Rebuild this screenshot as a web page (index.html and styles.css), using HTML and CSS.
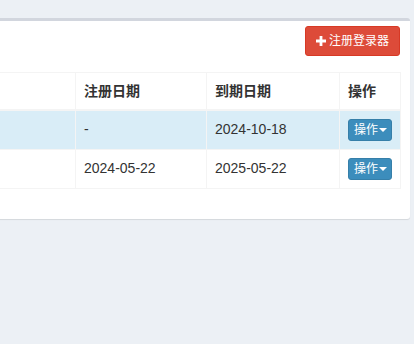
FILE: index.html
```html
<!DOCTYPE html>
<html lang="zh-CN">
<head>
  <meta charset="UTF-8" />
  <title>登录器管理</title>
  <meta name="viewport" content="width=device-width, initial-scale=1.0"/>
  <link rel="stylesheet" href="styles.css">
</head>
<body>

<section class="content">
  <div class="box">
    <div class="box-header">
      <button class="btn btn-danger">
        <svg class="icon-plus" viewBox="0 0 10 10" width="10" height="10"><path d="M3.6 0h2.8v3.6H10v2.8H6.4V10H3.6V6.4H0V3.6h3.6z" fill="#fff"/></svg>注册登录器
      </button>
    </div>

    <div class="box-body">
      <table class="table">
        <colgroup>
          <col class="col-id">
          <col class="col-name">
          <col class="col-date">
          <col class="col-date2">
          <col class="col-op">
        </colgroup>
        <thead>
          <tr>
            <th></th>
            <th></th>
            <th>注册日期</th>
            <th>到期日期</th>
            <th>操作</th>
          </tr>
        </thead>
        <tbody>
          <tr class="info">
            <td></td>
            <td></td>
            <td>-</td>
            <td>2024-10-18</td>
            <td><button class="btn btn-primary btn-xs">操作<span class="caret"></span></button></td>
          </tr>
          <tr>
            <td></td>
            <td></td>
            <td>2024-05-22</td>
            <td>2025-05-22</td>
            <td><button class="btn btn-primary btn-xs">操作<span class="caret"></span></button></td>
          </tr>
        </tbody>
      </table>
    </div>
  </div>
</section>

</body>
</html>
```

FILE: styles.css
```css
* {
  margin: 0;
  padding: 0;
  box-sizing: border-box;
}

body {
  background-color: #ecf0f5;
  color: #333;
  font-family: "Liberation Sans", Arial, "Noto Sans CJK SC", sans-serif;
  font-size: 14px;
  line-height: 20px;
  height: 344px;
  overflow: hidden;
}

.content {
  padding: 18px 4px 0 0;
}

/* Карточка */
.box {
  margin-left: -300px;
  background: #fff;
  border-top: 3px solid #d2d6de;
  border-radius: 3px;
  box-shadow: 0 1px 1px rgba(0, 0, 0, 0.1);
}

.box-header {
  display: flex;
  justify-content: flex-end;
  padding: 5px 10px 0;
}

.box-body {
  padding: 16px 10px 10px;
}

.btn {
  display: inline-flex;
  align-items: center;
  border: 1px solid transparent;
  border-radius: 3px;
  color: #fff;
  font-family: inherit;
  cursor: pointer;
}

.btn-danger {
  height: 30px;
  padding: 0 10px;
  font-size: 12px;
  line-height: 18px;
  background: #dd4b39;
  border-color: #d73925;
}

.icon-plus {
  margin-right: 3px;
}

.btn-primary {
  background: #3c8dbc;
  border-color: #367fa9;
}

.btn-xs {
  height: 22px;
  padding: 1px 4px 1px 5px;
  font-size: 12px;
  line-height: 18px;
}

.caret {
  display: inline-block;
  width: 0;
  height: 0;
  margin-left: 1px;
  border-top: 4px solid #fff;
  border-left: 4px solid transparent;
  border-right: 4px solid transparent;
}

/* Таблица */
.table {
  width: 690px;
  table-layout: fixed;
  border-collapse: collapse;
  border: 1px solid #f4f4f4;
  margin-bottom: 20px;
}

.col-id { width: 180px; }
.col-name { width: 185px; }
.col-date { width: 131px; }
.col-date2 { width: 133px; }
.col-op { width: 61px; }

.table th,
.table td {
  border: 1px solid #f4f4f4;
  padding: 8px;
  text-align: left;
  vertical-align: top;
  white-space: nowrap;
}

.table th {
  font-weight: bold;
  border-bottom-width: 2px;
}

.table tr.info td {
  background: #d9edf7;
}
```
